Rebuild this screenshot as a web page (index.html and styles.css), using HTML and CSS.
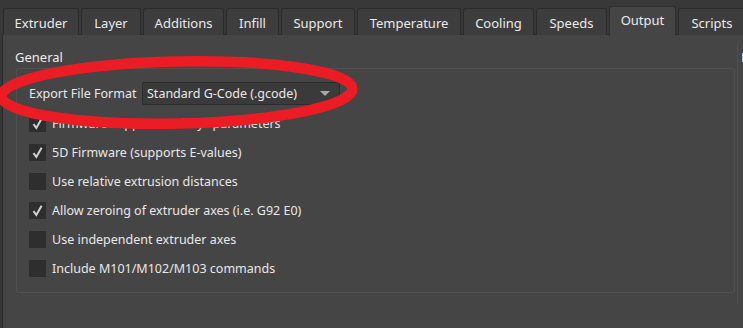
FILE: index.html
```html
<!DOCTYPE html>
<html>
<head>
<meta charset="utf-8">
<link rel="stylesheet" href="styles.css">
</head>
<body>
<div class="window">
  <div class="tabbar">
    <div class="tab t-extruder">Extruder</div>
    <div class="tab t-layer">Layer</div>
    <div class="tab t-additions">Additions</div>
    <div class="tab t-infill">Infill</div>
    <div class="tab t-support">Support</div>
    <div class="tab t-temp">Temperature</div>
    <div class="tab t-cooling">Cooling</div>
    <div class="tab t-speeds">Speeds</div>
    <div class="tab t-output active">Output</div>
    <div class="tab t-scripts">Scripts</div>
    <div class="tab t-more">Other</div>
  </div>
  <div class="panel">
    <div class="groups">
      <div class="group general">
        <div class="group-title">General</div>
        <div class="group-frame">
          <div class="form-row">
            <span class="label">Export File Format</span>
            <div class="combo">
              <span class="combo-text">Standard G-Code (.gcode)</span>
              <span class="combo-arrow"></span>
            </div>
          </div>
          <div class="checks">
            <div class="check-row"><span class="box checked"><svg viewBox="0 0 17 17" width="17" height="17"><path d="M4.5 9.2 L7.3 13 L12.6 3.8" fill="none" stroke="#d2d2d2" stroke-width="2"/></svg></span><span class="check-text">Firmware supports "sticky" parameters</span></div>
            <div class="check-row"><span class="box checked"><svg viewBox="0 0 17 17" width="17" height="17"><path d="M4.5 9.2 L7.3 13 L12.6 3.8" fill="none" stroke="#d2d2d2" stroke-width="2"/></svg></span><span class="check-text">5D Firmware (supports E-values)</span></div>
            <div class="check-row"><span class="box"></span><span class="check-text">Use relative extrusion distances</span></div>
            <div class="check-row"><span class="box checked"><svg viewBox="0 0 17 17" width="17" height="17"><path d="M4.5 9.2 L7.3 13 L12.6 3.8" fill="none" stroke="#d2d2d2" stroke-width="2"/></svg></span><span class="check-text">Allow zeroing of extruder axes (i.e. G92 E0)</span></div>
            <div class="check-row"><span class="box"></span><span class="check-text">Use independent extruder axes</span></div>
            <div class="check-row"><span class="box"></span><span class="check-text">Include M101/M102/M103 commands</span></div>
          </div>
        </div>
      </div>
      <div class="group side">
        <div class="group-title">N</div>
        <div class="side-frame"></div>
      </div>
    </div>
  </div>
  <svg class="marker" width="743" height="328" viewBox="0 0 743 328">
    <ellipse cx="177" cy="92.5" rx="175.5" ry="31" fill="none" stroke="#ec1c24" stroke-width="10.5" transform="rotate(-1.2 177 92.5)"/>
  </svg>
</div>
</body>
</html>
```
FILE: styles.css
```css
* { box-sizing: border-box; }
html, body {
  margin: 0;
  padding: 0;
  background: #383838;
}
body {
  font-family: "Noto Sans", "Open Sans", sans-serif;
  font-size: 12.5px;
  color: #e8e8e8;
}
.window {
  position: relative;
  width: 743px;
  height: 328px;
  overflow: hidden;
}
.tabbar {
  display: flex;
  gap: 2px;
  padding: 8px 0 0 3px;
  height: 35px;
  align-items: flex-start;
  position: relative;
  z-index: 1;
}
.tab {
  flex: none;
  height: 27px;
  background: #3d3d3d;
  border: 1px solid #2b2b2b;
  border-bottom: none;
  border-radius: 3px 3px 0 0;
  display: flex;
  align-items: center;
  justify-content: center;
  padding-top: 1px;
  font-size: 13px;
  color: #eaeaea;
}
.tab.active {
  margin-top: -2px;
  height: 30px;
  background: #454545;
  padding-top: 0;
  padding-bottom: 4px;
  border-color: #2f2f2f;
}
.t-extruder { width: 76px; }
.t-layer { width: 60px; }
.t-additions { width: 81px; }
.t-infill { width: 53px; }
.t-support { width: 74px; }
.t-temp { width: 104px; }
.t-cooling { width: 71px; }
.t-speeds { width: 71px; }
.t-output { width: 67px; }
.t-scripts { width: 68px; }
.t-more { width: 60px; }
.panel {
  margin: -1px 0 0 2px;
  height: 300px;
  background: #454545;
  border: 1px solid #2b2b2b;
  border-right: none;
}
.groups {
  display: flex;
  padding: 14px 0 0 12px;
}
.group-title {
  font-size: 13px;
  height: 19px;
  line-height: 16px;
  color: #ececec;
  white-space: nowrap;
}
.general {
  width: 720px;
  flex: none;
}
.group-frame {
  margin-left: 1px;
  height: 225px;
  border: 1px solid #505050;
  border-radius: 2px;
  padding: 13px 0 0 12px;
}
.form-row {
  display: flex;
  align-items: center;
  height: 23px;
}
.label {
  width: 113px;
}
.combo {
  width: 198px;
  height: 23px;
  background: #3a3a3a;
  border: 1px solid #2c2c2c;
  border-radius: 2px;
  display: flex;
  align-items: center;
  justify-content: space-between;
  padding: 0 9px 0 4px;
}
.combo-arrow {
  width: 0;
  height: 0;
  border-left: 5px solid transparent;
  border-right: 5px solid transparent;
  border-top: 5px solid #a8a8a8;
}
.checks {
  margin-top: 4px;
  display: flex;
  flex-direction: column;
}
.check-row {
  display: flex;
  align-items: center;
  height: 29px;
}
.box {
  width: 17px;
  height: 17px;
  background: #2e2e2e;
  margin-right: 6px;
  display: block;
  flex: none;
}
.box svg { display: block; }
.side {
  margin-left: 6px;
  flex: none;
  width: 20px;
}
.side-frame {
  height: 260px;
  margin-top: -24px;
  border-left: 1px solid #505050;
  margin-left: -4px;
}
.marker {
  position: absolute;
  left: 0;
  top: 0;
  pointer-events: none;
  z-index: 2;
}
```
